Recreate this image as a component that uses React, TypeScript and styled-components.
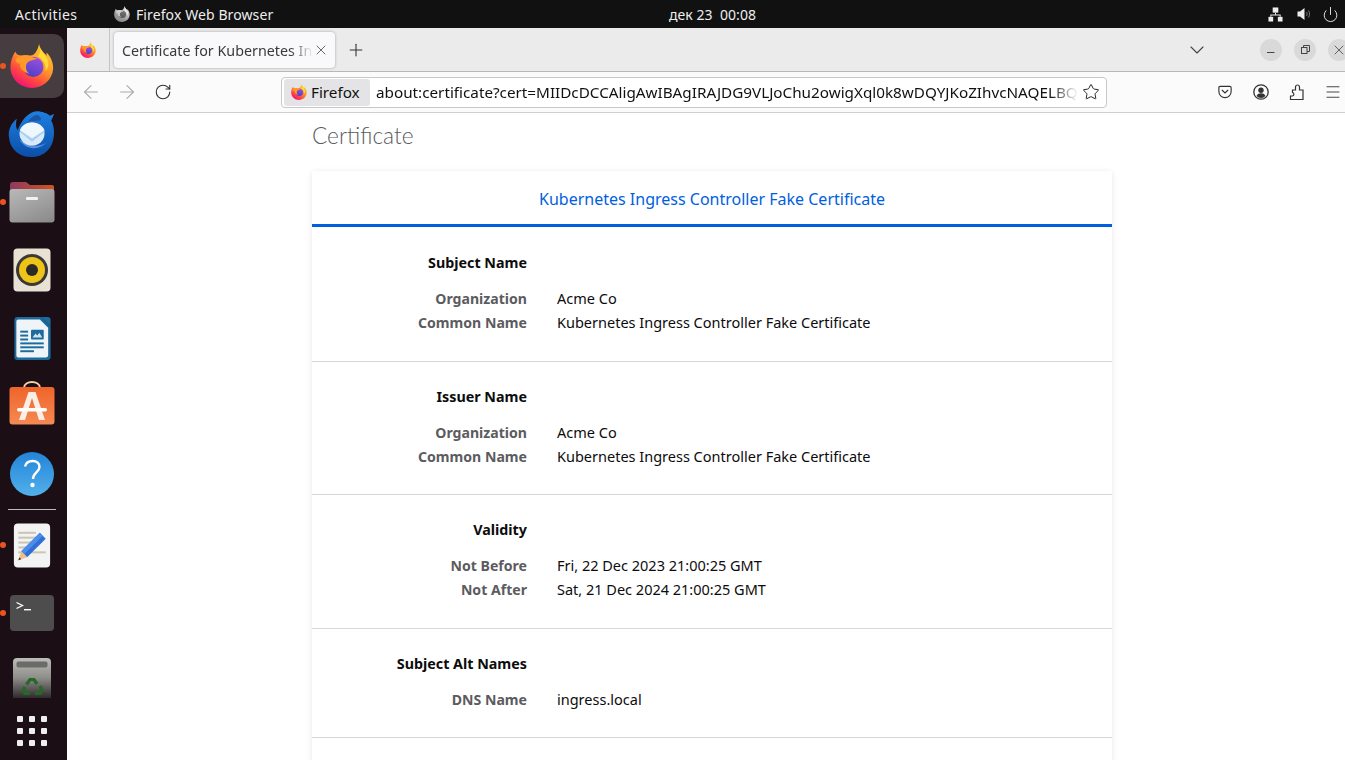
import styled, { createGlobalStyle } from 'styled-components';
import {
  ArrowLeft,
  ArrowRight,
  ChevronDown,
  Menu,
  Plus,
  Power,
  RotateCw,
  Star,
  X,
} from 'lucide-react';

const UI_FONT = '"Noto Sans", "Open Sans", sans-serif';

const GlobalStyle = createGlobalStyle`
  html, body {
    margin: 0;
    height: 100%;
    overflow: hidden;
    background: #fff;
  }
  * {
    box-sizing: border-box;
  }
  body {
    font-family: ${UI_FONT};
  }
`;

const FirefoxLogo = ({ size, id, grey }: { size: number; id: string; grey?: boolean }) => (
  <svg width={size} height={size} viewBox="0 0 100 100">
    <defs>
      <linearGradient id={`${id}-body`} x1="0.85" y1="0.1" x2="0.3" y2="1">
        <stop offset="0" stopColor={grey ? '#ddd' : '#ffc92e'} />
        <stop offset="0.4" stopColor={grey ? '#bbb' : '#ff9a2a'} />
        <stop offset="0.72" stopColor={grey ? '#999' : '#ff4a3d'} />
        <stop offset="1" stopColor={grey ? '#888' : '#f0107a'} />
      </linearGradient>
      <linearGradient id={`${id}-globe`} x1="0.7" y1="0" x2="0.3" y2="1">
        <stop offset="0" stopColor={grey ? '#777' : '#a04fe0'} />
        <stop offset="1" stopColor={grey ? '#555' : '#4a3fc8'} />
      </linearGradient>
    </defs>
    <path
      d="M66 0C68 12 76 19 84 27C82 23 83 21 84 20C93 30 99 44 98 57C96 82 75 100 50 100C23 100 1 79 1 53C1 40 5 28 12 17C14 24 20 27 30 26C38 25 48 28 54 24C60 18 64 10 66 0Z"
      fill={`url(#${id}-body)`}
    />
    <circle cx="53" cy="52" r="23" fill={`url(#${id}-globe)`} />
    <path
      d="M12 35C22 25 36 23 46 28C52 31 56 33 63 32C55 38 46 36 40 42C34 48 35 60 44 68C30 64 21 55 23 45C18 45 14 41 12 35Z"
      fill={grey ? '#ccc' : '#ff9a2a'}
    />
    <path
      d="M66 0C69 15 80 24 86 37C89 46 87 54 81 62C83 47 75 34 63 28C71 19 70 9 66 0Z"
      fill={grey ? '#eee' : '#ffdb3a'}
    />
  </svg>
);

const NetworkIcon = () => (
  <svg width="15" height="15" viewBox="0 0 16 16" fill="#eee">
    <rect x="5" y="0.500" width="6" height="5.500" />
    <rect x="0.500" y="10.500" width="5" height="5" />
    <rect x="10.500" y="10.500" width="5" height="5" />
    <path d="M7.500 6h1v2H13.500v2.500h-1V9h-9v1.500h-1V8h5z" />
  </svg>
);

const VolumeIcon = () => (
  <svg width="14" height="14" viewBox="0 0 14 14" fill="none">
    <path d="M0.500 4.500h2.500L7.500 1v12L3 9.500H0.500z" fill="#eee" />
    <path d="M9.500 5c.8 1.300.8 2.700 0 4M11.500 3.500c1.400 2.200 1.400 4.800 0 7" stroke="#777" strokeWidth="1" />
  </svg>
);

const ThunderbirdIcon = () => (
  <svg width="48" height="48" viewBox="0 -1 50 50">
    <defs>
      <linearGradient id="tb" x1="0.500" y1="0" x2="0.500" y2="1">
        <stop offset="0" stopColor="#1f7fe0" />
        <stop offset="1" stopColor="#0a4fa8" />
      </linearGradient>
    </defs>
    <path
      d="M26 1C32 -1 40 2 44 5L48 3C47 6 46 8 45 10C49 17 49 28 45 36C40 45 32 48 24 48C12 48 2 40 1 27C0 20 3 13 9 8C8 13 8 17 10 20C14 10 19 4 26 1Z"
      fill="url(#tb)"
    />
    <path d="M30 4C26 5 23 8 21 11L34 10C35 7 33 5 30 4Z" fill="#1a56a8" />
    <path d="M12 30C18 40 30 42 40 33C32 38 22 37 12 30Z" fill="#5d8fe0" />
    <ellipse cx="25" cy="24" rx="13" ry="12" fill="#d6eafa" />
    <path d="M12.500 20L25 28L38 20C36 15 31 12 25 12C19 12 14.500 15 12.500 20Z" fill="#eef7fd" />
    <path d="M12.500 20L25 29L38 20L38 22L25 32L12.500 22Z" fill="#a9cdee" />
  </svg>
);

const FilesIcon = () => (
  <svg width="46" height="42" viewBox="0 0 46 42">
    <defs>
      <linearGradient id="fl" x1="0" y1="0" x2="1" y2="0">
        <stop offset="0" stopColor="#8c3a5e" />
        <stop offset="1" stopColor="#d0541f" />
      </linearGradient>
      <linearGradient id="fb" x1="0.200" y1="0" x2="0.800" y2="1">
        <stop offset="0" stopColor="#b5b5b5" />
        <stop offset="1" stopColor="#8c8c8c" />
      </linearGradient>
    </defs>
    <path d="M1 4a3 3 0 0 1 3-3h13l4 3h22a2 2 0 0 1 2 2v8H1z" fill="url(#fl)" />
    <rect x="0.500" y="8" width="45" height="33.500" rx="3" fill="url(#fb)" />
    <rect x="17" y="16" width="12" height="3" rx="1" fill="#f2f2f2" />
  </svg>
);

const RhythmboxIcon = () => (
  <svg width="38" height="44" viewBox="0 0 38 44">
    <rect x="0.500" y="0.500" width="37" height="43" rx="4" fill="#e8e2d4" />
    <circle cx="19" cy="22" r="16" fill="#3b3838" />
    <circle cx="19" cy="22" r="13" fill="#efc419" />
    <circle cx="19" cy="22" r="6" fill="#2b2a28" />
  </svg>
);

const WriterIcon = () => (
  <svg width="38" height="45" viewBox="0 0 38 46">
    <path d="M4 1h24l10 10v31a3 3 0 0 1-3 3H4a3 3 0 0 1-3-3V4a3 3 0 0 1 3-3Z" fill="#1d6a9d" />
    <path d="M5 3.500h22L35.500 12v28a2.500 2.500 0 0 1-2.500 2.500H5A2 2 0 0 1 3 40.500V5.500a2 2 0 0 1 2-2Z" fill="#eef4f8" />
    <path d="M28 1h7a3 3 0 0 1 3 3v7Z" fill="#1d6a9d" />
    <g fill="#1d6a9d">
      <rect x="7" y="15" width="8" height="2" />
      <rect x="7" y="19" width="8" height="2" />
      <rect x="7" y="23" width="8" height="2" />
      <rect x="7" y="27" width="24" height="2" />
      <rect x="7" y="31" width="24" height="2" />
      <rect x="7" y="35" width="14" height="2" />
    </g>
    <rect x="18" y="14" width="13" height="10" rx="1" fill="#1d6a9d" />
    <path d="M19.500 22l3-4 2 2 2-3 3 5Z" fill="#cfe3f0" />
  </svg>
);

const StoreIcon = () => (
  <svg width="46" height="50" viewBox="0 0 46 50">
    <defs>
      <linearGradient id="st" x1="0.500" y1="0" x2="0.500" y2="1">
        <stop offset="0" stopColor="#f0642a" />
        <stop offset="1" stopColor="#f58a52" />
      </linearGradient>
    </defs>
    <path d="M15 7C15 -1 31 -1 31 7" fill="none" stroke="#f3cfa3" strokeWidth="2" />
    <rect x="0.500" y="6" width="45" height="37.500" rx="3" fill="url(#st)" />
    <path d="M19.500 11h7L36 39h-6L23 17 16 39h-6Z" fill="#fbeee6" />
    <rect x="8" y="27" width="30" height="3.500" rx="1.700" fill="#fff" />
  </svg>
);

const HelpIcon = () => (
  <svg width="44" height="44" viewBox="0 0 44 44">
    <defs>
      <linearGradient id="hp" x1="0.500" y1="0" x2="0.500" y2="1">
        <stop offset="0" stopColor="#2384d8" />
        <stop offset="1" stopColor="#52b0ea" />
      </linearGradient>
    </defs>
    <circle cx="22" cy="22" r="22" fill="url(#hp)" />
    <path
      d="M15 14.500C16 10.500 19 9 22.500 9C27 9 29.500 11.500 29.500 15C29.500 20 23 20.500 23 27"
      fill="none"
      stroke="#fff"
      strokeWidth="2.400"
    />
    <circle cx="22.500" cy="33" r="2.200" fill="#fff" />
  </svg>
);

const GeditIcon = () => (
  <svg width="38" height="45" viewBox="0 0 38 46">
    <rect x="0.500" y="0.500" width="37" height="45" rx="4" fill="#f3f3f3" />
    <g fill="#c9c4b4">
      <rect x="5" y="9" width="18" height="2" />
      <rect x="5" y="14" width="20" height="2" />
      <rect x="5" y="19" width="18" height="2" />
      <rect x="5" y="24" width="14" height="2" />
      <rect x="5" y="29" width="28" height="2" />
    </g>
    <path d="M27 10L33 16L14 35L8 29Z" fill="#2f6fd6" />
    <path d="M27 10L30 13L11 32L8 29Z" fill="#4c8dea" />
    <path d="M8 29L14 35L5 38Z" fill="#f0bf84" />
    <path d="M6.200 35L8 37L5 38Z" fill="#333" />
  </svg>
);

const TerminalIcon = () => (
  <svg width="44" height="36" viewBox="0 0 44 36">
    <rect x="0" y="0" width="44" height="36" rx="4" fill="#4d4d4d" />
    <path d="M6.500 7.500L12.500 10.500L6.500 13.500" fill="none" stroke="#fff" strokeWidth="1.300" />
    <rect x="14" y="14" width="7" height="1.400" fill="#fff" />
  </svg>
);

const TrashIcon = () => (
  <svg width="38" height="46" viewBox="0 0 38 46">
    <defs>
      <linearGradient id="tr" x1="0.500" y1="0" x2="0.500" y2="1">
        <stop offset="0" stopColor="#bcbcb8" />
        <stop offset="0.500" stopColor="#8d8d89" />
        <stop offset="1" stopColor="#2f2a2c" />
      </linearGradient>
    </defs>
    <path d="M4 0h30a4 4 0 0 1 4 4v36H0V4a4 4 0 0 1 4-4Z" fill="url(#tr)" />
    <rect x="3.500" y="3.500" width="31" height="6" rx="2" fill="#6b6b69" />
    <g fill="none" stroke="#226a26" strokeWidth="3.200">
      <path d="M13.500 26.500L17 21.500H21L24 26" />
      <path d="M27 28L29 32L27 35.500H22" />
      <path d="M17 35.500H12L10 32L12 29" />
    </g>
  </svg>
);

const MinimizeGlyph = () => (
  <svg width="10" height="10" viewBox="0 0 10 10" stroke="#444">
    <path d="M1 7.500H8.500" />
  </svg>
);

const RestoreGlyph = () => (
  <svg width="9" height="9" viewBox="0 0 9 9" fill="none" stroke="#444">
    <rect x="0.500" y="2.500" width="5.500" height="6" />
    <path d="M2.500 2.500V0.500H8.500V6.500H6" />
  </svg>
);

const PocketGlyph = () => (
  <svg width="14" height="14" viewBox="0 0 16 16" fill="none" stroke="#333" strokeWidth="1.300">
    <path d="M2.500 1.500h11a1.500 1.500 0 0 1 1.500 1.500v4.500a7 7 0 0 1-14 0V3a1.500 1.500 0 0 1 1.500-1.500Z" />
    <path d="M4.800 6L8 9l3.200-3" strokeLinecap="round" />
  </svg>
);

const AccountGlyph = () => (
  <svg width="16" height="16" viewBox="0 0 16 16" fill="none">
    <circle cx="8" cy="8" r="7.200" stroke="#333" strokeWidth="1.300" />
    <circle cx="8" cy="6.200" r="2.700" fill="#333" />
    <path d="M3.500 12c1-2 2.500-2.700 4.500-2.700s3.500.7 4.500 2.700a6 6 0 0 1-9 0Z" fill="#333" />
  </svg>
);

const ExtensionGlyph = () => (
  <svg width="16" height="16" viewBox="0 0 16 16" fill="none" stroke="#333" strokeWidth="1.200">
    <path d="M1.500 15.500H14V6H10.500V3A2 2 0 0 0 6.500 3V6H3.500V8.500A1.800 1.800 0 0 1 3.500 12H1.500Z" />
  </svg>
);

const dockApps = [
  { key: 'thunderbird', icon: <ThunderbirdIcon /> },
  { key: 'files', icon: <FilesIcon />, running: true },
  { key: 'rhythmbox', icon: <RhythmboxIcon /> },
  { key: 'writer', icon: <WriterIcon /> },
  { key: 'store', icon: <StoreIcon /> },
  { key: 'help', icon: <HelpIcon /> },
];

const certSections = [
  {
    title: 'Subject Name',
    rows: [
      ['Organization', 'Acme Co'],
      ['Common Name', 'Kubernetes Ingress Controller Fake Certificate'],
    ],
  },
  {
    title: 'Issuer Name',
    rows: [
      ['Organization', 'Acme Co'],
      ['Common Name', 'Kubernetes Ingress Controller Fake Certificate'],
    ],
  },
  {
    title: 'Validity',
    rows: [
      ['Not Before', 'Fri, 22 Dec 2023 21:00:25 GMT'],
      ['Not After', 'Sat, 21 Dec 2024 21:00:25 GMT'],
    ],
  },
  {
    title: 'Subject Alt Names',
    rows: [['DNS Name', 'ingress.local']],
  },
];

const CERT_URL =
  'about:certificate?cert=MIIDcDCCAligAwIBAgIRAJDG9VLJoChu2owigXql0k8wDQYJKoZIhvcNAQELBQ';

const Screen = styled.div`
  width: 1345px;
  height: 760px;
  display: flex;
  flex-direction: column;
  overflow: hidden;
`;

const TopBar = styled.div`
  flex: 0 0 28px;
  display: flex;
  align-items: center;
  background: #111;
  color: #eee;
  font-size: 14px;
  padding-left: 15px;
`;

const TopLeft = styled.div`
  width: 654px;
  display: flex;
  align-items: center;
`;

const Activities = styled.span`
  width: 99px;
  letter-spacing: 0.4px;
`;

const AppMenu = styled.span`
  display: flex;
  align-items: center;
  gap: 6px;
  letter-spacing: 0.1px;
`;

const Clock = styled.span`
  white-space: nowrap;
  letter-spacing: 0.05px;
`;

const Tray = styled.div`
  margin-left: auto;
  display: flex;
  align-items: center;
  gap: 14px;
  padding-right: 6px;
`;

const PowerIcon = styled(Power)`
  margin-left: -3px;
`;

const Desktop = styled.div`
  flex: 1;
  display: flex;
  min-height: 0;
`;

const Dock = styled.div`
  flex: 0 0 67px;
  display: flex;
  flex-direction: column;
  align-items: stretch;
  background: #1b0f15;
  padding-top: 6px;
`;

const DockSlot = styled.div`
  position: relative;
  flex: 0 0 68px;
  display: flex;
  align-items: center;
  justify-content: center;
  padding-right: 3px;
`;

const ActiveTile = styled(DockSlot)`
  flex: 0 0 64px;
  width: 64px;
  margin-bottom: 2px;
  padding-right: 0;
  background: #453d40;
  border-radius: 0 10px 10px 0;
`;

const RunDot = styled.span`
  position: absolute;
  left: 0;
  top: 50%;
  width: 6px;
  height: 6px;
  margin-top: -3px;
  border-radius: 50%;
  background: #e95420;
`;

const DockSeparator = styled.div`
  flex: 0 0 1px;
  margin: 1px 11px 1px 8px;
  background: #bbb;
`;

const AppGrid = styled.div`
  width: 30px;
  margin: 1px 0 0 17px;
  display: grid;
  grid-template-columns: repeat(3, 6px);
  justify-content: space-between;
  row-gap: 6px;
`;

const GridDot = styled.span`
  width: 6px;
  height: 6px;
  border-radius: 1px;
  background: #eee;
`;

const Browser = styled.div`
  flex: 0 0 1290px;
  display: flex;
  flex-direction: column;
  min-height: 0;
`;

const TabBar = styled.div`
  flex: 0 0 44px;
  display: flex;
  align-items: center;
  background: #ebebeb;
  border-bottom: 1px solid #b8b8b8;
`;

const ViewButton = styled.div`
  width: 43px;
  height: 100%;
  display: flex;
  align-items: center;
  justify-content: center;
  border-right: 1px solid #c4c4c4;
`;

const Tab = styled.div`
  width: 221px;
  height: 36px;
  margin-left: 4px;
  padding: 0 6px 0 8px;
  display: flex;
  align-items: center;
  background: #f9f9fb;
  border-radius: 4px;
  box-shadow: 0 0 3px rgba(0, 0, 0, 0.3);
`;

const TabTitle = styled.span`
  flex: 1;
  padding-top: 2px;
  overflow: hidden;
  white-space: nowrap;
  font-size: 14.300px;
  color: #3a3a3a;
  -webkit-mask-image: linear-gradient(to right, #000 88%, transparent);
  mask-image: linear-gradient(to right, #000 88%, transparent);
`;

const NewTab = styled.div`
  width: 41px;
  display: flex;
  justify-content: center;
`;

const TabList = styled.div`
  margin-left: auto;
  display: flex;
`;

const WindowButtons = styled.div`
  margin-left: 51px;
  padding-right: 7px;
  display: flex;
  gap: 12px;
`;

const WindowButton = styled.div`
  width: 22px;
  height: 22px;
  border-radius: 50%;
  background: #d9d9d9;
  display: flex;
  align-items: center;
  justify-content: center;
`;

const NavBar = styled.div`
  flex: 0 0 41px;
  display: flex;
  align-items: center;
  padding-left: 6px;
  background: #fbfbfc;
  border-bottom: 1px solid #cfcfcf;
`;

const NavGroup = styled.div`
  display: flex;
`;

const NavButton = styled.div`
  width: 36px;
  height: 32px;
  display: flex;
  align-items: center;
  justify-content: center;
`;

const UrlBar = styled.div`
  width: 826px;
  height: 31px;
  margin: 0 100px;
  padding: 0 6px 0 2px;
  display: flex;
  align-items: center;
  background: #fff;
  border: 1px solid #c8c8c8;
  border-radius: 4px;
  font-size: 15.250px;
  color: #111;
`;

const IdentityChip = styled.div`
  flex: 0 0 86px;
  height: 27px;
  display: flex;
  align-items: center;
  gap: 4px;
  padding-left: 7px;
  background: #e4e4e6;
  border-radius: 3px;
`;

const UrlText = styled.span`
  flex: 1;
  margin: 0 4px 0 6px;
  overflow: hidden;
  white-space: nowrap;
  -webkit-mask-image: linear-gradient(to right, #000 96%, transparent);
  mask-image: linear-gradient(to right, #000 96%, transparent);
`;

const Content = styled.div`
  flex: 1;
  min-height: 0;
  overflow: hidden;
  background: #fff;
`;

const Column = styled.div`
  width: 800px;
  margin: 0 auto;
`;

const PageTitle = styled.h1`
  margin: 0;
  height: 58px;
  padding-top: 6px;
  font-family: Lato, "Open Sans", sans-serif;
  font-size: 22.700px;
  line-height: 34px;
  font-weight: 300;
  color: #5b5b60;
`;

const Card = styled.div`
  min-height: 700px;
  background: #fff;
  box-shadow: 0 1px 6px rgba(0, 0, 0, 0.1);
`;

const CardHeader = styled.div`
  height: 56px;
  padding-top: 13px;
  line-height: 30px;
  text-align: center;
  font-size: 16px;
  color: #0060df;
  border-bottom: 3px solid #0060df;
`;

const Section = styled.div`
  padding: 23px 0 26.400px;
  border-top: 1px solid #d7d7db;

  ${CardHeader} + & {
    padding: 24px 0 27px;
    border-top: none;
  }

  &:last-child {
    border-bottom: 1px solid #d7d7db;
  }
`;

const SectionTitle = styled.div`
  width: 215px;
  margin-bottom: 11px;
  text-align: right;
  font-size: 14.300px;
  line-height: 24px;
  font-weight: 700;
  color: #0c0c0d;
`;

const Rows = styled.div`
  display: flex;
  flex-direction: column;
`;

const Row = styled.div`
  display: grid;
  grid-template-columns: 215px 1fr;
  column-gap: 30px;
  align-items: baseline;
  height: 24px;
  line-height: 24px;
`;

const Label = styled.span`
  text-align: right;
  font-size: 14.100px;
  font-weight: 700;
  color: #5b5b60;
`;

const Value = styled.span`
  font-size: 14.500px;
  color: #0c0c0d;
`;

export default function App() {
  return (
    <>
      <GlobalStyle />
      <Screen>
        <TopBar>
          <TopLeft>
            <Activities>Activities</Activities>
            <AppMenu>
              <FirefoxLogo size={16} id="panel" grey />
              Firefox Web Browser
            </AppMenu>
          </TopLeft>
          <Clock>дек 23&nbsp;&nbsp;00:08</Clock>
          <Tray>
            <NetworkIcon />
            <VolumeIcon />
            <PowerIcon size={17} color="#eee" strokeWidth={1.3} />
          </Tray>
        </TopBar>
        <Desktop>
          <Dock>
            <ActiveTile>
              <RunDot />
              <FirefoxLogo size={44} id="dock" />
            </ActiveTile>
            {dockApps.map(app => (
              <DockSlot key={app.key}>
                {app.running && <RunDot />}
                {app.icon}
              </DockSlot>
            ))}
            <DockSeparator />
            <DockSlot>
              <RunDot />
              <GeditIcon />
            </DockSlot>
            <DockSlot>
              <RunDot />
              <TerminalIcon />
            </DockSlot>
            <DockSlot>
              <TrashIcon />
            </DockSlot>
            <AppGrid>
              {Array.from({ length: 9 }).map((_, i) => (
                <GridDot key={i} />
              ))}
            </AppGrid>
          </Dock>
          <Browser>
            <TabBar>
              <ViewButton>
                <FirefoxLogo size={16} id="view" />
              </ViewButton>
              <Tab>
                <TabTitle>Certificate for Kubernetes In</TabTitle>
                <X size={16} color="#444" strokeWidth={1.2} />
              </Tab>
              <NewTab>
                <Plus size={20} color="#333" strokeWidth={1.3} />
              </NewTab>
              <TabList>
                <ChevronDown size={24} color="#444" strokeWidth={1.1} />
              </TabList>
              <WindowButtons>
                <WindowButton>
                  <MinimizeGlyph />
                </WindowButton>
                <WindowButton>
                  <RestoreGlyph />
                </WindowButton>
                <WindowButton>
                  <X size={16} color="#444" strokeWidth={1.2} />
                </WindowButton>
              </WindowButtons>
            </TabBar>
            <NavBar>
              <NavGroup>
                <NavButton>
                  <ArrowLeft size={22} color="#aaa" strokeWidth={1.2} />
                </NavButton>
                <NavButton>
                  <ArrowRight size={22} color="#aaa" strokeWidth={1.2} />
                </NavButton>
                <NavButton>
                  <RotateCw size={18} color="#333" strokeWidth={1.5} />
                </NavButton>
              </NavGroup>
              <UrlBar>
                <IdentityChip>
                  <FirefoxLogo size={16} id="chip" />
                  Firefox
                </IdentityChip>
                <UrlText>{CERT_URL}</UrlText>
                <Star size={18} color="#222" strokeWidth={1.3} />
              </UrlBar>
              <NavGroup>
                <NavButton>
                  <PocketGlyph />
                </NavButton>
                <NavButton>
                  <AccountGlyph />
                </NavButton>
                <NavButton>
                  <ExtensionGlyph />
                </NavButton>
                <NavButton>
                  <Menu size={18} color="#333" strokeWidth={1.2} />
                </NavButton>
              </NavGroup>
            </NavBar>
            <Content>
              <Column>
                <PageTitle>Certificate</PageTitle>
                <Card>
                  <CardHeader>Kubernetes Ingress Controller Fake Certificate</CardHeader>
                  {certSections.map(section => (
                    <Section key={section.title}>
                      <SectionTitle>{section.title}</SectionTitle>
                      <Rows>
                        {section.rows.map(([label, value]) => (
                          <Row key={label}>
                            <Label>{label}</Label>
                            <Value>{value}</Value>
                          </Row>
                        ))}
                      </Rows>
                    </Section>
                  ))}
                </Card>
              </Column>
            </Content>
          </Browser>
        </Desktop>
      </Screen>
    </>
  );
}
